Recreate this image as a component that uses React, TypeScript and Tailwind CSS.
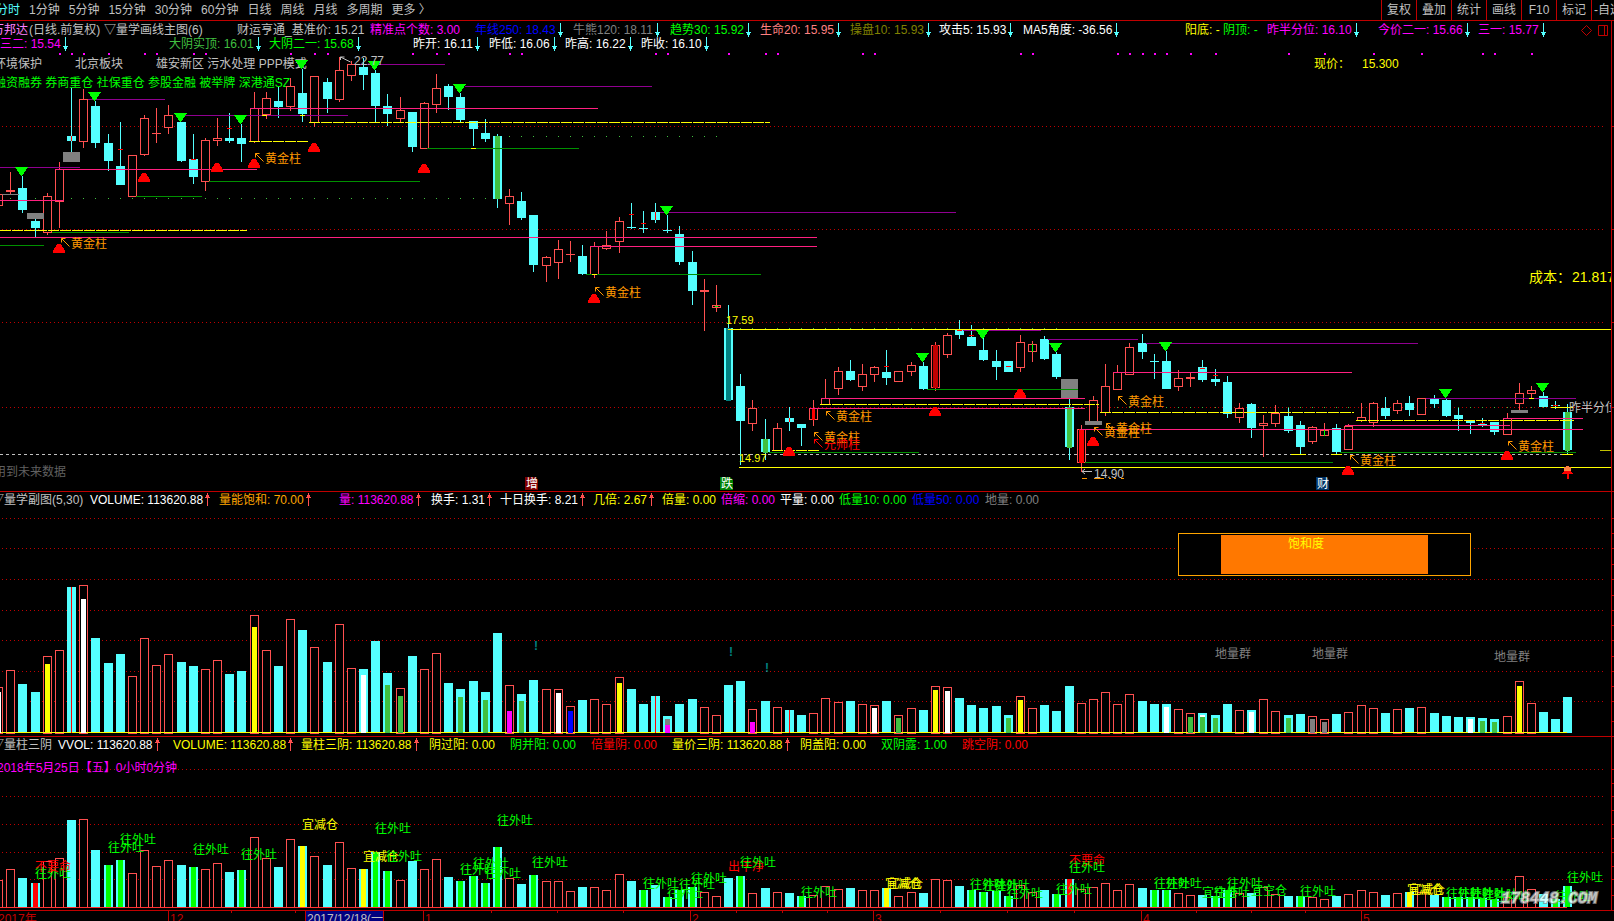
import clsx from "clsx";
import type { ReactNode } from "react";

const RED = "#ff5050";
const CYAN = "#54ffff";
const LINE = "#c00000";
const GREEN = "#40c040";
const LIME = "#00ff00";
const YELLOW = "#ffff00";
const WHITE = "#ffffff";
const GRAY = "#808080";
const SILVER = "#c0c0c0";
const MAGENTA = "#ff00ff";
const ORANGE = "#ff9900";
const PURPLE = "#900090";
const PINK = "#ff2080";
const DARK_GREEN = "#009000";

// x of a trading day; day -1 is cut off by the left edge
const cx = (day: number) => Math.round(10.3 + 12.165 * day);

type Candle = ["r" | "c", number, number, number, number];

// direction, high, body top, body bottom, low
const CANDLES: Candle[] = [
  ["r", 194, 194, 206, 206], ["r", 172, 190, 192, 194], ["c", 176, 188, 210, 213],
  ["c", 219, 221, 228, 237], ["r", 193, 196, 233, 235], ["r", 162, 169, 202, 228],
  ["c", 88, 136, 141, 152], ["r", 89, 99, 142, 148], ["c", 101, 106, 143, 148],
  ["c", 134, 143, 161, 171], ["c", 122, 166, 185, 185], ["r", 155, 155, 197, 197],
  ["r", 115, 118, 155, 156], ["r", 108, 133, 134, 143], ["r", 105, 115, 128, 134],
  ["c", 122, 122, 161, 162], ["c", 134, 159, 177, 184], ["r", 138, 140, 182, 191],
  ["r", 118, 138, 141, 146], ["c", 113, 138, 141, 143], ["c", 124, 138, 144, 162],
  ["r", 92, 108, 142, 143], ["r", 92, 98, 115, 119], ["c", 87, 101, 107, 118],
  ["r", 78, 86, 107, 111], ["c", 69, 93, 114, 122], ["r", 76, 76, 123, 127],
  ["c", 78, 82, 99, 113], ["r", 57, 70, 100, 102], ["r", 61, 64, 76, 81],
  ["c", 58, 67, 75, 90], ["c", 70, 73, 106, 122], ["c", 94, 106, 114, 126],
  ["r", 97, 110, 119, 122], ["c", 112, 112, 147, 152], ["r", 102, 103, 149, 149],
  ["r", 74, 88, 105, 113], ["c", 84, 86, 97, 110], ["c", 93, 97, 120, 122],
  ["c", 121, 121, 129, 146], ["c", 119, 133, 139, 142], ["c", 134, 136, 199, 208],
  ["r", 189, 196, 204, 225], ["c", 192, 201, 218, 220], ["c", 215, 215, 265, 272],
  ["r", 256, 257, 266, 282], ["r", 240, 249, 263, 279], ["r", 241, 254, 255, 262],
  ["c", 245, 256, 274, 275], ["r", 242, 246, 275, 278], ["r", 231, 245, 249, 250],
  ["r", 217, 221, 242, 253], ["c", 203, 227, 228, 229], ["c", 211, 228, 229, 233],
  ["c", 203, 212, 220, 223], ["c", 215, 230, 231, 233], ["c", 226, 234, 262, 265],
  ["c", 251, 262, 291, 305], ["r", 279, 290, 292, 331], ["r", 285, 305, 308, 312],
  ["c", 305, 328, 400, 400], ["c", 374, 386, 421, 465], ["r", 400, 408, 424, 431],
  ["c", 419, 439, 452, 460], ["r", 423, 428, 451, 451], ["c", 407, 418, 422, 431],
  ["c", 424, 424, 428, 446], ["r", 400, 408, 420, 426], ["r", 379, 398, 405, 405],
  ["r", 367, 371, 389, 395], ["c", 360, 371, 380, 381], ["r", 364, 374, 387, 391],
  ["r", 366, 367, 375, 382], ["c", 350, 372, 378, 385], ["r", 371, 371, 382, 382],
  ["r", 362, 365, 372, 376], ["c", 362, 366, 389, 390], ["r", 342, 345, 388, 391],
  ["r", 333, 335, 355, 358], ["c", 320, 330, 335, 339], ["c", 325, 337, 346, 346],
  ["c", 338, 350, 360, 361], ["c", 350, 361, 367, 380], ["c", 361, 361, 372, 372],
  ["r", 335, 342, 368, 372], ["r", 341, 344, 352, 362], ["c", 336, 339, 359, 360],
  ["c", 352, 354, 377, 379], ["c", 399, 407, 447, 460], ["r", 425, 429, 463, 472],
  ["r", 396, 400, 422, 422], ["r", 364, 386, 413, 416], ["r", 365, 372, 390, 390],
  ["r", 343, 347, 375, 375], ["c", 334, 343, 352, 359], ["c", 354, 361, 362, 379],
  ["c", 351, 361, 389, 389], ["r", 370, 378, 387, 391], ["r", 372, 377, 379, 387],
  ["c", 360, 367, 380, 382], ["c", 369, 379, 382, 386], ["c", 376, 382, 414, 418],
  ["r", 403, 408, 418, 423], ["c", 403, 404, 428, 438], ["r", 415, 423, 426, 457],
  ["r", 405, 413, 424, 427], ["c", 408, 416, 431, 433], ["c", 421, 425, 447, 454],
  ["r", 426, 427, 442, 444], ["r", 423, 430, 436, 436], ["c", 424, 428, 452, 454],
  ["r", 424, 426, 450, 450], ["r", 403, 417, 421, 422], ["r", 402, 403, 423, 427],
  ["c", 397, 408, 416, 419], ["r", 400, 403, 411, 414], ["c", 396, 403, 410, 416],
  ["r", 398, 398, 415, 415], ["c", 395, 399, 404, 408], ["c", 398, 400, 416, 417],
  ["c", 408, 415, 419, 431], ["c", 420, 421, 423, 434], ["c", 418, 424, 425, 427],
  ["c", 422, 422, 432, 435], ["r", 413, 418, 435, 435], ["r", 383, 393, 404, 410],
  ["r", 386, 390, 394, 398], ["c", 392, 396, 407, 407], ["c", 401, 405, 406, 409],
  ["c", 404, 412, 450, 454],
];

const VOLUMES = [
  46, 63, 49, 41, 77, 83, 146, 148, 95, 70, 79, 57, 95, 68, 79, 71, 67, 64, 73, 59, 62,
  118, 83, 67, 114, 103, 86, 71, 109, 65, 64, 92, 60, 45, 77, 64, 80, 50, 44, 52, 41,
  100, 48, 39, 53, 44, 44, 27, 33, 34, 29, 56, 44, 29, 37, 17, 29, 34, 26, 18, 48, 52,
  24, 32, 26, 23, 18, 20, 35, 31, 32, 29, 28, 32, 18, 25, 23, 47, 46, 35, 28, 25, 27,
  18, 37, 25, 28, 22, 47, 30, 34, 41, 29, 39, 32, 29, 29, 24, 20, 20, 18, 29, 23, 23,
  34, 22, 18, 19, 17, 14, 19, 21, 28, 25, 20, 24, 25, 26, 20, 17, 16, 16, 15, 14, 17,
  52, 30, 21, 14, 36,
];

// day, height, colour
const VOLUME_MARKS: [number, number, string][] = [
  [-1, 41, WHITE], [3, 69, YELLOW], [6, 134, WHITE], [20, 106, YELLOW], [29, 58, WHITE],
  [31, 48, GREEN], [32, 37, GREEN], [37, 36, GREEN], [39, 33, GREEN], [41, 22, MAGENTA],
  [42, 32, GREEN], [45, 40, WHITE], [46, 22, "#0000ff"], [50, 50, YELLOW], [54, 14, GRAY],
  [54, 8, MAGENTA], [61, 11, MAGENTA], [71, 25, WHITE], [73, 15, GREEN], [76, 43, YELLOW],
  [77, 42, WHITE], [82, 15, GREEN], [83, 33, YELLOW], [95, 26, WHITE], [97, 16, GREEN],
  [98, 18, WHITE], [98, 16, GREEN], [99, 15, GREEN], [102, 21, WHITE], [105, 15, GREEN],
  [107, 14, GRAY], [108, 11, GRAY], [120, 14, WHITE], [121, 12, GREEN], [122, 11, GREEN],
  [124, 47, YELLOW],
];

const SIGNAL_DAYS: [string, number[]][] = [
  ["#ff0000", [2, 87]],
  [YELLOW, [24, 29, 72, 115]],
  [
    LIME,
    [
      8, 9, 15, 19, 30, 31, 37, 38, 39, 40, 43, 52, 54, 55, 56, 60, 65, 79, 80, 81, 82,
      86, 94, 95, 99, 100, 106, 118, 119, 120, 121, 122, 127, 128,
    ],
  ],
];

const DOT_DAYS = [
  4, 5, 6, 8, 11, 12, 15, 16, 23, 25, 26, 33, 35, 36, 41, 42, 53, 54, 59, 62, 63, 70, 71,
  83, 84, 91, 92, 93, 94, 95, 97, 99, 105, 108, 112, 116, 121, 122, 125,
];

// x1, x2, y, colour
const LEVELS: [number, number, number, string][] = [
  [0, 80, 167, PURPLE], [88, 165, 99, PURPLE], [182, 348, 115, PURPLE],
  [358, 445, 64, PURPLE], [465, 652, 86, PURPLE], [660, 956, 212, PURPLE],
  [963, 1041, 330, PURPLE], [1048, 1138, 339, PURPLE], [1146, 1418, 343, PURPLE],
  [1426, 1576, 398, PURPLE],
  [0, 44, 245, DARK_GREEN], [52, 129, 232, DARK_GREEN], [136, 202, 196, DARK_GREEN],
  [209, 420, 181, DARK_GREEN], [427, 579, 148, DARK_GREEN], [586, 761, 274, DARK_GREEN],
  [769, 919, 452, DARK_GREEN], [927, 1078, 389, DARK_GREEN],
  [1085, 1333, 462, DARK_GREEN], [1340, 1576, 452, DARK_GREEN],
  [0, 64, 200, PINK], [55, 257, 169, PINK], [250, 598, 108, PINK], [0, 817, 237, PINK],
  [590, 817, 246, PINK], [821, 1085, 398, PINK], [809, 1085, 408, PINK],
  [1113, 1352, 372, PINK], [1080, 1583, 429, PINK], [1345, 1510, 425, PINK],
  [1503, 1583, 418, PINK],
  [728, 1611, 329, YELLOW], [739, 1611, 467, YELLOW], [1551, 1573, 407, YELLOW],
  [1562, 1573, 454, YELLOW], [1291, 1306, 454, YELLOW], [1331, 1342, 454, YELLOW],
  [262, 267, 115, YELLOW], [300, 305, 115, YELLOW], [471, 476, 148, YELLOW],
  [592, 597, 274, YELLOW], [1529, 1534, 398, YELLOW], [1600, 1611, 450, "#c0c000"],
  [2, 19, 194, GRAY],
];

const DASHED_LEVELS = [
  [0, 247, 230], [249, 308, 141], [309, 770, 122], [772, 819, 450], [820, 1099, 404],
  [1100, 1354, 412], [1356, 1574, 420],
];

const GRAY_BOXES = [
  [63, 152, 17, 10], [27, 213, 17, 6], [1061, 379, 17, 19], [1085, 421, 17, 4],
  [1511, 410, 17, 3],
];

const TOPS = [
  [21, 167], [94, 92], [180, 113], [240, 115], [301, 60], [374, 61], [459, 84],
  [666, 206], [922, 353], [982, 330], [1055, 343], [1165, 342], [1445, 389], [1542, 383],
];

const BOTTOMS = [
  [144, 182], [217, 172], [254, 168], [314, 152], [424, 173], [59, 253], [594, 303],
  [789, 456], [935, 416], [1020, 398], [1093, 446], [1348, 475], [1507, 460],
];

// pillar names: arrow x, middle y
const PILLARS: [number, number, string, string][] = [
  [61, 243, "黄金柱", ORANGE], [255, 158, "黄金柱", ORANGE], [595, 292, "黄金柱", ORANGE],
  [826, 416, "黄金柱", ORANGE], [814, 437, "黄金柱", ORANGE], [814, 444, "元帅柱", "#ff0000"],
  [1118, 401, "黄金柱", ORANGE], [1106, 428, "黄金柱", ORANGE],
  [1094, 432, "黄金柱", ORANGE], [1350, 460, "黄金柱", ORANGE],
  [1508, 446, "黄金柱", ORANGE],
];

// day, y: short red strokes across a wick or a body
const RED_TICKS = [
  [9, 149], [15, 159], [18, 128], [51, 214], [52, 223], [72, 366], [78, 330], [79, 335],
  [82, 366], [98, 368], [99, 375], [121, 423], [127, 405],
];

// day, top, bottom, width, colour
const BODY_MARKS: [number, number, number, number, string][] = [
  [40, 136, 199, 5, GREEN], [59, 328, 401, 5, "#008080"], [62, 439, 453, 5, GREEN],
  [66, 408, 420, 3, "#ff0000"], [76, 345, 388, 5, LINE], [87, 407, 448, 5, GREEN],
  [88, 429, 463, 5, "#ff0000"], [128, 412, 451, 5, GREEN], [5, 136, 141, 1, "#ff0000"],
  [53, 212, 220, 1, "#ff0000"], [64, 418, 422, 1, "#ff0000"], [58, 306, 307, 3, LIME],
  [84, 344, 352, 1, LIME], [108, 430, 436, 1, LIME],
];

const SELL = "往外吐";
const CUT = "宜减仓";

type LabelData = [number, number, string, string];

const SIGNALS: LabelData[] = [
  [35, 873, SELL, LIME], [35, 866, "不要命", "#ff0000"], [108, 847, SELL, LIME],
  [120, 839, SELL, LIME], [193, 849, SELL, LIME], [241, 854, SELL, LIME],
  [302, 824, CUT, YELLOW], [375, 828, SELL, LIME], [363, 856, CUT, YELLOW],
  [386, 856, SELL, LIME], [497, 820, SELL, LIME], [460, 869, SELL, LIME],
  [473, 863, SELL, LIME], [485, 873, SELL, LIME], [532, 862, SELL, LIME],
  [643, 883, SELL, LIME], [679, 884, SELL, LIME], [667, 893, SELL, LIME],
  [691, 878, SELL, LIME], [728, 866, "出干净", "#ff0000"], [740, 862, SELL, LIME],
  [801, 892, SELL, LIME], [885, 883, CUT, YELLOW], [887, 883, CUT, YELLOW],
  [970, 884, SELL, LIME], [983, 885, SELL, LIME], [994, 885, SELL, LIME],
  [1007, 893, SELL, LIME], [1056, 889, SELL, LIME], [1069, 860, "不要命", "#ff0000"],
  [1069, 867, SELL, LIME], [1154, 883, SELL, LIME], [1166, 883, SELL, LIME],
  [1202, 892, "宜空仓", LIME], [1214, 892, SELL, LIME], [1227, 883, SELL, LIME],
  [1251, 890, "宜空仓", LIME], [1300, 891, SELL, LIME], [1409, 889, CUT, YELLOW],
  [1407, 889, CUT, YELLOW], [1446, 893, SELL, LIME], [1458, 893, SELL, LIME],
  [1470, 893, SELL, LIME], [1482, 894, SELL, LIME], [1494, 896, SELL, LIME],
  [1555, 896, SELL, LIME], [1567, 877, SELL, LIME],
];

const PERIODS = [
  "分时", "1分钟", "5分钟", "15分钟", "30分钟", "60分钟", "日线", "周线", "月线", "多周期",
  "更多 〉",
];

const TOOLS = ["复权", "叠加", "统计", "画线", "F10", "标记", "-自选"];

type FieldData = { text: string; className: string; trend?: "up" | "down" };

const MAIN_FIELDS: FieldData[] = [
  { text: "万邦达", className: "w-[37px] text-[#ff80ff]" },
  { text: "(日线.前复权)", className: "w-[75px] text-[#c0c0c0]" },
  { text: "▽量学画线主图(6)", className: "w-[133px] text-[#c0c0c0]" },
  { text: "财运亨通_基准价: 15.21", className: "w-[133px] text-[#c0c0c0]" },
  { text: "精准点个数: 3.00", className: "w-[105px] text-[#ff00ff]" },
  { text: "年线250: 18.43", className: "w-[98px] text-[#0000ff]", trend: "down" },
  { text: "牛熊120: 18.11", className: "w-[97px] text-[#808080]", trend: "down" },
  { text: "趋势30: 15.92", className: "w-[90px] text-[#00ff00]", trend: "down" },
  { text: "生命20: 15.95", className: "w-[90px] text-[#ff8080]", trend: "down" },
  { text: "操盘10: 15.93", className: "w-[89px] text-[#808000]", trend: "down" },
  { text: "攻击5: 15.93", className: "w-[84px] text-white", trend: "down" },
  { text: "MA5角度: -36.56", className: "w-[162px] text-white", trend: "down" },
  { text: "阳底: -", className: "w-[38px] text-[#ffff00]" },
  { text: "阴顶: -", className: "w-[44px] text-[#00ff00]" },
  { text: "昨半分位: 16.10", className: "w-[111px] text-[#ff00ff]", trend: "down" },
  { text: "今价二一: 15.66", className: "w-[100px] text-[#ff00ff]", trend: "down" },
  { text: "三一: 15.77", className: "text-[#ff00ff]", trend: "down" },
];

const PRICE_FIELDS: FieldData[] = [
  { text: "三二: 15.54", className: "w-[169px] text-[#ff00ff]", trend: "down" },
  { text: "大阴实顶: 16.01", className: "w-[100px] text-[#40c040]", trend: "down" },
  { text: "大阴二一: 15.68", className: "w-[144px] text-[#00ff00]", trend: "down" },
  { text: "昨开: 16.11", className: "w-[76px] text-white", trend: "down" },
  { text: "昨低: 16.06", className: "w-[76px] text-white", trend: "down" },
  { text: "昨高: 16.22", className: "w-[76px] text-white", trend: "down" },
  { text: "昨收: 16.10", className: "w-[76px] text-white", trend: "down" },
];

const VOLUME_FIELDS: FieldData[] = [
  { text: "▽量学副图(5,30)", className: "w-[98px] text-[#c0c0c0]" },
  { text: "VOLUME: 113620.88", className: "w-[129px] text-white", trend: "up" },
  { text: "量能饱和: 70.00", className: "w-[120px] text-[#ffa500]", trend: "up" },
  { text: "量: 113620.88", className: "w-[92px] text-[#ff00ff]", trend: "up" },
  { text: "换手: 1.31", className: "w-[69px] text-white", trend: "up" },
  { text: "十日换手: 8.21", className: "w-[93px] text-white", trend: "up" },
  { text: "几倍: 2.67", className: "w-[69px] text-[#ffff00]", trend: "up" },
  { text: "倍量: 0.00", className: "w-[59px] text-[#ffff00]" },
  { text: "倍缩: 0.00", className: "w-[59px] text-[#ff00ff]" },
  { text: "平量: 0.00", className: "w-[59px] text-white" },
  { text: "低量10: 0.00", className: "w-[73px] text-[#00ff00]" },
  { text: "低量50: 0.00", className: "w-[73px] text-[#0000ff]" },
  { text: "地量: 0.00", className: "text-[#808080]" },
];

const SIGNAL_FIELDS: FieldData[] = [
  { text: "▽量柱三阴", className: "w-[66px] text-[#c0c0c0]" },
  { text: "VVOL: 113620.88", className: "w-[115px] text-white", trend: "up" },
  { text: "VOLUME: 113620.88", className: "w-[128px] text-[#ffff00]", trend: "up" },
  { text: "量柱三阴: 113620.88", className: "w-[128px] text-[#ffff00]", trend: "up" },
  { text: "阴过阳: 0.00", className: "w-[81px] text-[#ffff00]" },
  { text: "阴并阳: 0.00", className: "w-[81px] text-[#00ff00]" },
  { text: "倍量阴: 0.00", className: "w-[81px] text-[#ff0000]" },
  { text: "量价三阴: 113620.88", className: "w-[128px] text-[#ffff00]", trend: "up" },
  { text: "阴盖阳: 0.00", className: "w-[81px] text-[#ffff00]" },
  { text: "双阴露: 1.00", className: "w-[81px] text-[#00ff00]" },
  { text: "跳空阴: 0.00", className: "text-[#ff0000]" },
];

const Trend = ({ trend }: { trend: "up" | "down" }) => (
  <svg className="ml-0.5 h-[14px] w-[5px] shrink-0" shapeRendering="crispEdges">
    {trend === "down" ? (
      <path d="M2 0h1v9h2v1h-1v2h-1v2h-1v-2h-1v-2h-1v-1h2z" fill={CYAN} />
    ) : (
      <path d="M2 0h1v2h1v2h1v1h-2v8h-1v-8h-2v-1h1v-2h1z" fill={RED} />
    )}
  </svg>
);

const Fields = ({ items, children }: { items: FieldData[]; children?: ReactNode }) => (
  <>
    {items.map(({ text, className, trend }) => (
      <span key={text} className={clsx("flex shrink-0 whitespace-pre", className)}>
        {text}
        {trend && <Trend trend={trend} />}
      </span>
    ))}
    {children}
  </>
);

// a chart with its header, the value scale runs along the right edge
const Panel = ({
  header,
  chart,
  ticks,
  top,
  height,
}: {
  header: ReactNode;
  chart: ReactNode;
  ticks: number[];
  top: number;
  height: string;
}) => (
  <section className="flex border-b border-[#c00000]">
    <div className="min-w-0 flex-1 overflow-hidden border-r border-[#c00000]">
      {header}
      <svg className={clsx("block w-full", height)}>
        <g transform={`translate(0 ${-top})`}>{chart}</g>
      </svg>
    </div>
    <div className="flex w-0.5 flex-col justify-end">
      <svg className={clsx("block w-full", height)} shapeRendering="crispEdges">
        {ticks.map((y) => (
          <rect key={y} y={y - top} width="2" height="1" fill={LINE} />
        ))}
      </svg>
    </div>
  </section>
);

const Grid = ({ rows }: { rows: number[] }) => (
  <>
    {rows.map((y) => (
      <line
        key={y}
        x1="2"
        x2="99.7%"
        y1={y + 0.5}
        y2={y + 0.5}
        stroke={LINE}
        strokeDasharray="1 3"
      />
    ))}
  </>
);

const Label = ({
  x,
  y,
  color,
  size = 12,
  children,
}: {
  x: number;
  y: number;
  color: string;
  size?: number;
  children: ReactNode;
}) => (
  <text x={x} y={y + 5} fill={color} fontSize={size}>
    {children}
  </text>
);

const Bars = ({ base, scale }: { base: number; scale: number }) => (
  <>
    {VOLUMES.map((volume, n) => {
      const x = cx(n - 1) - 4;
      const h = Math.round(volume * scale);
      return CANDLES[n][0] === "r" ? (
        <rect
          key={n}
          x={x + 0.5}
          y={base - h + 0.5}
          width="8"
          height={h}
          fill="#000"
          stroke={RED}
        />
      ) : (
        <rect key={n} x={x} y={base - h} width="9" height={h} fill={CYAN} />
      );
    })}
  </>
);

const Candles = () => (
  <>
    {CANDLES.map(([dir, high, top, bottom, low], n) => {
      const x = cx(n - 1);
      const color = dir === "r" ? RED : CYAN;
      const body = Math.max(bottom - top, 1);
      return (
        <g key={n}>
          <rect x={x} y={high} width="1" height={Math.max(low - high, 1)} fill={color} />
          {dir === "r" && body > 2 ? (
            <rect
              x={x - 3.5}
              y={top + 0.5}
              width="8"
              height={body - 1}
              fill="#000"
              stroke={color}
            />
          ) : (
            <rect x={x - 4} y={top} width="9" height={body} fill={color} />
          )}
        </g>
      );
    })}
  </>
);

const dots = (from: number, to: number) =>
  Array.from({ length: to - from + 1 }, (_, n) => from + n);

const Badge = ({ x, color, children }: { x: number; color: string; children: string }) => (
  <g>
    <path d={`M${x} 477h10l3 3v10h-13z`} fill={color} />
    <Label x={x + 1} y={483} color={WHITE}>
      {children}
    </Label>
  </g>
);

const MainChart = () => (
  <>
    <g shapeRendering="crispEdges">
      <Grid rows={[126, 229, 322, 407]} />
      {DOT_DAYS.map((day) => (
        <rect key={day} x={cx(day)} y="53" width="2" height="2" fill={MAGENTA} />
      ))}
      {dots(0, 39).map((day) => (
        <rect key={day} x={cx(day)} y="198" width="1" height="1" fill={GREEN} />
      ))}
      {dots(41, 58).map((day) => (
        <rect key={day} x={cx(day)} y="136" width="1" height="1" fill={GREEN} />
      ))}
      {dots(60, 86).map((day) => (
        <rect key={day} x={cx(day)} y="328" width="1" height="1" fill={GREEN} />
      ))}
      {dots(88, 128).map((day) => (
        <rect key={day} x={cx(day)} y="407" width="1" height="1" fill={GREEN} />
      ))}
      <line x2="1567" y1="454.5" y2="454.5" stroke={SILVER} strokeDasharray="3 3" />
    </g>

    <Label x={-6} y={63} color={SILVER}>环境保护</Label>
    <Label x={75} y={63} color={SILVER}>北京板块</Label>
    <Label x={156} y={63} color={SILVER}>雄安新区 污水处理 PPP模式</Label>
    <Label x={-6} y={82} color={LIME}>
      融资融券 券商重仓 社保重仓 参股金融 被举牌 深港通SZ
    </Label>
    <Label x={1314} y={63} color={YELLOW}>现价：</Label>
    <Label x={1362} y={63} color={YELLOW}>15.300</Label>
    <Label x={1529} y={277} color={YELLOW} size={14}>成本：</Label>
    <Label x={1572} y={277} color={YELLOW} size={14}>21.817</Label>
    <Label x={-6} y={471} color="#606060">用到未来数据</Label>

    <g shapeRendering="crispEdges">
      <Candles />
      {BODY_MARKS.map(([day, top, bottom, width, color]) => (
        <rect
          key={day}
          x={cx(day) - (width - 1) / 2}
          y={top}
          width={width}
          height={bottom - top}
          fill={color}
        />
      ))}
      {RED_TICKS.map(([day, y]) => (
        <rect key={day} x={cx(day) - 2} y={y} width="5" height="1" fill="#ff0000" />
      ))}
      {GRAY_BOXES.map(([x, y, width, height]) => (
        <rect key={x} x={x} y={y} width={width} height={height} fill={GRAY} />
      ))}
      {LEVELS.map(([x1, x2, y, color]) => (
        <rect key={`${x1}-${y}`} x={x1} y={y} width={x2 - x1} height="1" fill={color} />
      ))}
      {DASHED_LEVELS.map(([x1, x2, y]) => (
        <line
          key={x1}
          x1={x1}
          x2={x2}
          y1={y + 0.5}
          y2={y + 0.5}
          stroke={YELLOW}
          strokeDasharray="11 1"
        />
      ))}
      {TOPS.map(([x, y]) => (
        <path key={x} d={`M${x - 6} ${y}h13l-6 9h-1z`} fill={LIME} />
      ))}
      {BOTTOMS.map(([x, y]) => (
        <path key={x} d={`M${x - 6} ${y}v-2l4 -7h4l4 7v2z`} fill="#ff0000" />
      ))}
    </g>

    {PILLARS.map(([x, y, name, color]) => (
      <g key={`${x}-${y}`}>
        <path
          d={`M${x + 0.5} ${y - 0.5}v-4h4m-4 0l8 8`}
          fill="none"
          stroke={color}
        />
        <Label x={x + 10} y={y} color={color}>
          {name}
        </Label>
      </g>
    ))}

    <path d="M340.500 60v-3h4m-4 0l10 5" fill="none" stroke={SILVER} />
    <Label x={354} y={60} color={SILVER}>22.77</Label>
    <Label x={726} y={319} color={YELLOW} size={11}>17.59</Label>
    <Label x={739} y={457} color={YELLOW} size={11}>14.97</Label>
    <path d="M1085 469l-3 2.500l3 2.500m-3 -2.500h10" fill="none" stroke={SILVER} />
    <Label x={1094} y={473} color={SILVER}>14.90</Label>
    <path
      d="M1082 478.500h5m7 0h10m5 0h2m3 0h2m5 0h3"
      fill="none"
      stroke={ORANGE}
    />
    <Label x={1569} y={407} color={SILVER}>昨半分位</Label>

    <Badge x={525} color="#800000">增</Badge>
    <Badge x={720} color="#008000">跌</Badge>
    <Badge x={1316} color="#003366">财</Badge>

    <g shapeRendering="crispEdges">
      <path d="M1564 471v-4h2v-1h3v1h2v4z" fill="#ff8040" />
      <path d="M1564 471h7l2 3h-4v5h-2v-5h-5z" fill="#ff0000" />
    </g>
  </>
);

const VolumeChart = () => (
  <>
    <g shapeRendering="crispEdges">
      <Grid rows={[518, 548, 579, 610, 640, 671, 701]} />
      <Bars base={733} scale={1} />
      <rect y="732" width="1567" height="1" fill={YELLOW} />
      {VOLUME_MARKS.map(([day, height, color], n) => (
        <rect key={n} x={cx(day) - 2} y={733 - height} width="5" height={height} fill={color} />
      ))}
      {[5, 53, 64].map((day) => (
        <rect
          key={day}
          x={cx(day)}
          y={733 - VOLUMES[day + 1]}
          width="1"
          height={VOLUMES[day + 1]}
          fill="#ff0000"
        />
      ))}
      <rect x="1178.500" y="533.500" width="292" height="42" fill="#000" stroke="#ffa500" />
      <rect x="1221" y="535" width="207" height="39" fill="#ff7800" />
    </g>
    <Label x={1288} y={543} color={YELLOW}>饱和度</Label>
    <Label x={1215} y={653} color={GRAY}>地量群</Label>
    <Label x={1312} y={653} color={GRAY}>地量群</Label>
    <Label x={1494} y={656} color={GRAY}>地量群</Label>
    <g fontWeight="bold">
      <Label x={534} y={645} color="#008080">!</Label>
      <Label x={729} y={651} color="#008080">!</Label>
      <Label x={765} y={667} color="#008080">!</Label>
    </g>
  </>
);

const SignalChart = () => (
  <>
    <g shapeRendering="crispEdges">
      <Grid rows={[769, 796, 824, 852, 879]} />
      <Bars base={907} scale={0.596} />
      {SIGNAL_DAYS.map(([color, days]) =>
        days.map((day) => {
          const h = Math.round(VOLUMES[day + 1] * 0.596);
          return (
            <rect key={day} x={cx(day) - 2} y={907 - h} width="5" height={h} fill={color} />
          );
        }),
      )}
      <rect y="907" width="1567" height="1" fill="#ff3030" />
    </g>
    <Label x={-3} y={767} color={MAGENTA}>2018年5月25日【五】0小时0分钟</Label>
    {SIGNALS.map(([x, y, text, color]) => (
      <Label key={`${x}-${y}`} x={x} y={y} color={color}>
        {text}
      </Label>
    ))}
    <text
      x="1501"
      y="903"
      fontSize="16"
      className="fill-white stroke-[#909090] stroke-2 font-['Liberation_Mono',monospace] font-bold italic opacity-75 [paint-order:stroke]"
    >
      178448.COM
    </text>
  </>
);

const MONTHS: [number, string][] = [
  [168, "12"], [423, "1"], [690, "2"], [873, "3"], [1141, "4"], [1361, "5"],
];

const WEEKS = [231, 295, 491, 557, 623, 736, 782, 827, 940, 1007, 1074, 1196, 1251, 1305];

const DateAxis = () => (
  <svg className="block h-[10px] w-full">
    <text x="-2" y="12" fontSize="12" fill={LINE}>2017年</text>
    {MONTHS.map(([x, name]) => (
      <g key={x}>
        <rect x={x} width="1" height="10" fill={LINE} />
        <text x={x + 2} y="12" fontSize="12" fill={LINE}>
          {name}
        </text>
      </g>
    ))}
    {WEEKS.map((x) => (
      <rect key={x} x={x} width="1" height="2" fill={LINE} />
    ))}
    <rect x="305.500" y="-1" width="78" height="12" fill="#000080" stroke={LINE} />
    <text x="307" y="12" fontSize="12" fill={SILVER}>2017/12/18(一</text>
  </svg>
);

export default function App() {
  return (
    <div className="min-h-screen overflow-hidden bg-black font-['Liberation_Sans','Noto_Sans_CJK_SC',sans-serif] text-xs">
      <header className="flex h-[21px] justify-between overflow-hidden border-b border-[#c00000] text-[#c0c0c0]">
        <nav className="-ml-1 flex gap-[9px]">
          {PERIODS.map((period) => (
            <button
              key={period}
              type="button"
              className={clsx("shrink-0 whitespace-nowrap", period === "分时" && "text-[#54ffff]")}
            >
              {period}
            </button>
          ))}
        </nav>
        <div className="flex">
          {TOOLS.map((tool) => (
            <button
              key={tool}
              type="button"
              className="w-[35px] shrink-0 overflow-hidden border-l border-[#c00000] whitespace-nowrap last:w-[23px] last:pl-0.5 last:text-left"
            >
              {tool}
            </button>
          ))}
        </div>
      </header>

      <main>
        <Panel
          top={51}
          height="h-[440px]"
          ticks={[126, 229, 322, 407]}
          header={
            <div className="h-[30px] pt-0.5 leading-[14px]">
              <div className="-ml-2 flex">
                <Fields items={MAIN_FIELDS}>
                  <svg className="mt-0.5 mr-0.5 ml-auto h-3 w-7 shrink-0" fill="none" stroke={LINE}>
                    <path d="M5.500 .5l5 5l-5 5l-5 -5z" />
                    <path d="M17.500 .5h9v10h-9zM23.500 .5v10" />
                  </svg>
                </Fields>
              </div>
              <div className="flex">
                <Fields items={PRICE_FIELDS} />
              </div>
            </div>
          }
          chart={<MainChart />}
        />
        <Panel
          top={508}
          height="h-[228px]"
          ticks={[518, 533, 548, 564, 579, 595, 610, 625, 640, 656, 671, 686, 701, 721]}
          header={
            <div className="-ml-2 flex h-4 pt-px leading-[14px]">
              <Fields items={VOLUME_FIELDS} />
            </div>
          }
          chart={<VolumeChart />}
        />
        <Panel
          top={753}
          height="h-[157px]"
          ticks={[769, 783, 796, 810, 824, 838, 852, 866, 879, 895]}
          header={
            <div className="-ml-2 flex h-4 pt-px leading-[14px]">
              <Fields items={SIGNAL_FIELDS} />
            </div>
          }
          chart={<SignalChart />}
        />
      </main>
      <DateAxis />
    </div>
  );
}
